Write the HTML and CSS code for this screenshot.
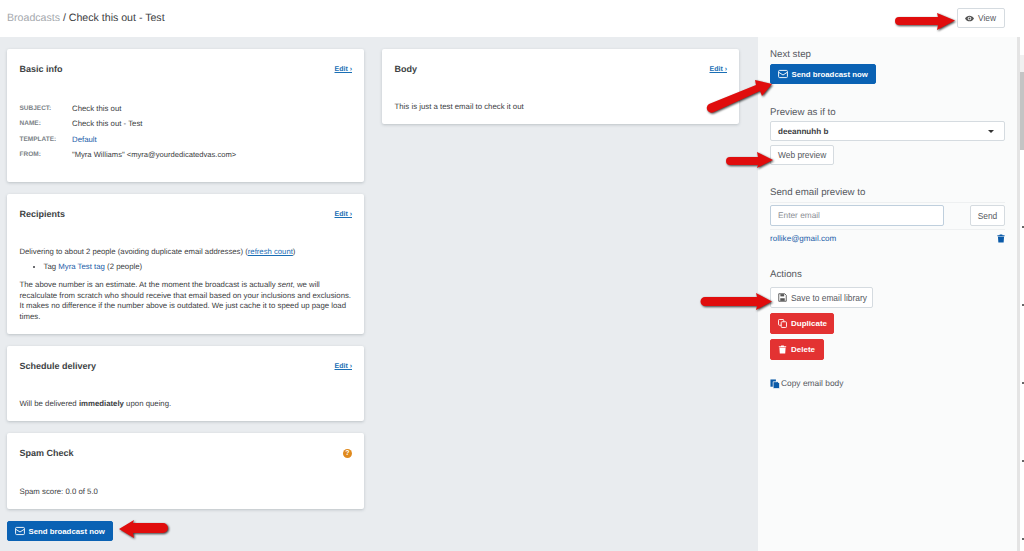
FILE: index.html
```html
<!DOCTYPE html>
<html lang="en">
<head>
<meta charset="utf-8">
<title>Broadcast</title>
<link rel="stylesheet" href="styles.css">
</head>
<body>
<header class="topbar">
  <div class="crumb"><span class="crumb-link">Broadcasts</span> / Check this out - Test</div>
  <button class="btn btn-default btn-view"><svg class="ic" viewBox="0 0 12 12"><path d="M0 6c1.500-2.500 3.500-3.800 6-3.800S10.500 3.500 12 6c-1.500 2.500-3.500 3.800-6 3.800S1.500 8.500 0 6z" fill="#555"/><circle cx="6" cy="6" r="2.300" fill="#fff"/><circle cx="6" cy="6" r="1.300" fill="#555"/></svg>View</button>
</header>
<div class="layout">
  <main class="main">
    <div class="columns">
      <div class="col">
        <section class="card card-basic">
          <div class="card-head"><h2>Basic info</h2><a class="edit">Edit ›</a></div>
          <dl class="info">
            <div class="info-row"><dt>SUBJECT:</dt><dd>Check this out</dd></div>
            <div class="info-row"><dt>NAME:</dt><dd>Check this out - Test</dd></div>
            <div class="info-row"><dt>TEMPLATE:</dt><dd class="link">Default</dd></div>
            <div class="info-row"><dt>FROM:</dt><dd class="from">"Myra Williams" &lt;myra@yourdedicatedvas.com&gt;</dd></div>
          </dl>
        </section>
        <section class="card card-recipients">
          <div class="card-head"><h2>Recipients</h2><a class="edit">Edit ›</a></div>
          <p class="deliver">Delivering to about 2 people (avoiding duplicate email addresses) (<a class="under">refresh count</a>)</p>
          <ul class="tags"><li>Tag <span class="link">Myra Test tag</span> (2 people)</li></ul>
          <p class="note">The above number is an estimate. At the moment the broadcast is actually <em>sent</em>, we will recalculate from scratch who should receive that email based on your inclusions and exclusions. It makes no difference if the number above is outdated. We just cache it to speed up page load times.</p>
        </section>
        <section class="card card-schedule">
          <div class="card-head"><h2>Schedule delivery</h2><a class="edit">Edit ›</a></div>
          <p class="card-text">Will be delivered <strong>immediately</strong> upon queing.</p>
        </section>
        <section class="card card-spam">
          <div class="card-head"><h2>Spam Check</h2><span class="help">?</span></div>
          <p class="card-text">Spam score: 0.0 of 5.0</p>
        </section>
        <button class="btn btn-primary"><svg class="ic ic-mail" viewBox="0 0 12 12"><rect x="0.700" y="1.700" width="10.600" height="8.600" rx="1.200" fill="none" stroke="#fff" stroke-width="1.100"/><path d="M1 4l5 3.200L11 4" fill="none" stroke="#fff" stroke-width="1.100"/></svg>Send broadcast now</button>
      </div>
      <div class="col">
        <section class="card card-body">
          <div class="card-head"><h2>Body</h2><a class="edit">Edit ›</a></div>
          <p class="card-text">This is just a test email to check it out</p>
        </section>
      </div>
    </div>
  </main>
  <aside class="side">
    <h3 class="side-title first">Next step</h3>
    <button class="btn btn-primary"><svg class="ic ic-mail" viewBox="0 0 12 12"><rect x="0.700" y="1.700" width="10.600" height="8.600" rx="1.200" fill="none" stroke="#fff" stroke-width="1.100"/><path d="M1 4l5 3.200L11 4" fill="none" stroke="#fff" stroke-width="1.100"/></svg>Send broadcast now</button>
    <h3 class="side-title preview-title">Preview as if to</h3>
    <div class="select"><span>deeannuhh b</span><i class="caret"></i></div>
    <button class="btn btn-default btn-web">Web preview</button>
    <h3 class="side-title send-title">Send email preview to</h3>
    <div class="send-row">
      <div class="input">Enter email</div>
      <button class="btn btn-default btn-send">Send</button>
    </div>
    <div class="preview-row">
      <a class="link">rollike@gmail.com</a>
      <svg class="trash" viewBox="0 0 10 11"><path d="M3.500 0.500h3l.5 1h2.500v1.200H0.500V1.500H3zM1.200 3.400h7.600l-.5 7.100H1.700z" fill="#0a5aa8"/></svg>
    </div>
    <h3 class="side-title actions-title">Actions</h3>
    <button class="btn btn-default btn-save"><svg class="ic" viewBox="0 0 12 12"><path d="M1 1h8l2 2v8H1z" fill="none" stroke="#555" stroke-width="1.200"/><rect x="3.200" y="1.500" width="5" height="3" fill="#555"/><rect x="3" y="7" width="6" height="3.500" fill="#555"/></svg>Save to email library</button>
    <button class="btn btn-danger btn-dup"><svg class="ic" viewBox="0 0 12 12"><rect x="0.700" y="0.700" width="7" height="7.600" rx="1" fill="none" stroke="#fff" stroke-width="1.200"/><rect x="4.300" y="3.700" width="7" height="7.600" rx="1" fill="#e33232" stroke="#fff" stroke-width="1.200"/></svg>Duplicate</button>
    <button class="btn btn-danger btn-del"><svg class="ic" viewBox="0 0 10 11"><path d="M3.500 0.500h3l.5 1h2.500v1.200H0.500V1.500H3zM1.200 3.400h7.600l-.5 7.100H1.700z" fill="#fff"/></svg>Delete</button>
    <div class="copy"><svg class="copy-ic" viewBox="0 0 11 11"><path d="M0.500 0.500h6v8h-6z" fill="#0a5aa8"/><path d="M3.500 3h5l2 2v5.500h-7z" fill="#0a5aa8" stroke="#fafbfb" stroke-width="0.800"/></svg>Copy email body</div>
  </aside>
  <div class="scrollbar">
    <div class="scroll-cap"></div>
    <div class="scroll-track"></div>
    <div class="scroll-thumb"></div>
    <div class="scroll-mark"></div>
    <div class="scroll-mark"></div>
    <div class="scroll-mark"></div>
    <div class="scroll-mark"></div>
    <div class="scroll-mark"></div>
  </div>
</div>

<svg class="arrow arrow-view" viewBox="0 0 66 24"><path class="arrow-shape" d="M6 6H45L44 2L62 9.500L44 19L45 14H6a4 4 0 0 1 0-8z"/></svg>
<svg class="arrow arrow-send" viewBox="0 0 70 40"><path class="arrow-shape" d="M3 28L50 9L49 4L66 8L56 20L54 15L8 36a4.500 4.500 0 0 1-5-8z"/></svg>
<svg class="arrow arrow-web" viewBox="0 0 50 24"><path class="arrow-shape" d="M5 9H33L32 4L48 12L32 20L33 17H5a4 4 0 0 1 0-8z"/></svg>
<svg class="arrow arrow-save" viewBox="0 0 74 24"><path class="arrow-shape" d="M5 6H57L56 2L72 10.500L56 19L57 15H5a4.500 4.500 0 0 1 0-9z"/></svg>
<svg class="arrow arrow-bottom" viewBox="0 0 52 24"><path class="arrow-shape" d="M45 5H15L16 2L1 11L16 20L15 15H45a5 5 0 0 0 0-10z"/></svg>
</body>
</html>
```

FILE: styles.css
```css
* { box-sizing: border-box; }
html, body { margin: 0; padding: 0; }
body {
  width: 1024px;
  height: 551px;
  overflow: hidden;
  position: relative;
  background: #e9ecef;
  color: #3b3d42;
  font-family: "Liberation Sans", Arial, sans-serif;
  font-size: 8px;
  line-height: 11px;
  text-rendering: geometricPrecision;
}
.topbar {
  height: 37px;
  background: #fff;
  display: flex;
  justify-content: space-between;
  align-items: center;
  padding: 0 19px 1px 7px;
}
.crumb { font-size: 10.600px; }
.crumb-link { color: #a4a8ad; }
.layout { display: flex; height: 514px; }
.main { width: 758px; padding: 12px 0 0 7px; }
.columns { display: flex; gap: 18px; }
.col { width: 357px; }
.card {
  background: #fff;
  border-radius: 2px;
  box-shadow: 0 1px 3px rgba(60, 70, 80, .25);
  padding: 12px 12px 12px 12.500px;
  margin-bottom: 12px;
}
.card-head { display: flex; justify-content: space-between; align-items: center; height: 17px; }
.card-head h2 { margin: 0; font-size: 9px; font-weight: 700; color: #3d3f44; }
.edit { color: #1a6fb5; font-size: 7px; font-weight: 700; text-decoration: underline; }
.card-basic { height: 133px; }
.info { margin: 23px 0 0; }
.info-row { display: flex; height: 15.300px; align-items: center; }
.info-row dt { width: 52.500px; color: #7a7f86; font-size: 6.500px; font-weight: 700; }
.info-row dd { margin: 0; font-size: 7.800px; }
.info-row .from { font-size: 7.600px; }
.link { color: #1b5ca8; }
.under { color: #1b6eb5; text-decoration: underline; }
.card-recipients { height: 140px; }
.deliver { margin: 23px 0 0; font-size: 7.730px; }
.tags { margin: 4px 0 8px; padding-left: 24px; font-size: 7.800px; }
.note { margin: 0; font-size: 7.800px; line-height: 10.500px; }
.card-schedule { height: 75px; }
.card-spam { height: 76px; }
.card-body { height: 75px; }
.card-text { margin: 23px 0 0; font-size: 7.800px; }
.card-spam .card-text { margin-top: 24px; }
.help {
  width: 9px; height: 9px; border-radius: 50%;
  background: #e08a1e; color: #fff;
  font-size: 7px; line-height: 9px; font-weight: 700; text-align: center;
}
.btn {
  display: inline-flex; align-items: center;
  font-family: inherit; font-size: 8.400px;
  height: 20px; padding: 0 7px;
  border-radius: 2px; white-space: nowrap;
  cursor: pointer;
}
.btn-primary { background: #0a62b4; border: 1px solid #0a62b4; color: #fff; font-weight: 700; font-size: 7.800px; width: 106px; }
.btn-default { background: #fff; border: 1px solid #d5dbe0; color: #55585e; }
.btn-danger { background: #e33232; border: 1px solid #e33232; color: #fff; font-weight: 700; font-size: 8px; }
.ic { width: 9px; height: 9px; margin-right: 4px; flex: none; }
.ic-mail { width: 10px; height: 10px; margin-right: 3.500px; }
.btn-view { width: 48px; height: 20px; }
.side {
  width: 259px;
  background: #fafbfb;
  padding: 0 12px;
  display: flex; flex-direction: column; align-items: flex-start;
}
.side-title { margin: 0; font-size: 9.700px; font-weight: 400; color: #55585e; line-height: 11px; }
.first { margin-top: 12px; margin-bottom: 4px; }
.preview-title { margin-top: 23px; margin-bottom: 3px; }
.select {
  width: 235px; height: 20px; background: #fff;
  border: 1px solid #d5dbe0; border-radius: 2px;
  display: flex; align-items: center; justify-content: space-between;
  padding: 0 10px 0 7px; font-size: 8.100px; font-weight: 700;
}
.caret { width: 0; height: 0; border: 3px solid transparent; border-top: 3.500px solid #333; border-bottom: 0; }
.btn-web { margin-top: 4px; width: 64px; }
.send-title { margin-top: 22px; padding-bottom: 4px; width: 235px; }
.send-row {
  width: 235px; display: flex; justify-content: space-between;
  padding: 2px 0 3px;
  border-top: 1px solid #eef0f1; border-bottom: 1px solid #eef0f1;
}
.input {
  width: 174px; height: 21px; background: #fff;
  border: 1px solid #bfcfdd; border-radius: 2px;
  padding: 0 7px; line-height: 19px; color: #8c9096; font-size: 8.300px;
}
.btn-send { width: 35px; height: 21px; justify-content: center; padding: 0; }
.preview-row { width: 235px; display: flex; justify-content: space-between; align-items: center; font-size: 8.100px; margin-top: 2px; height: 13px; }
.trash { width: 8px; height: 9px; }
.actions-title { margin-top: 24px; margin-bottom: 7px; }
.btn-save { width: 103px; height: 21px; }
.btn-dup { width: 64px; height: 21px; margin-top: 5px; }
.btn-del { width: 54px; height: 21px; margin-top: 5px; }
.copy { margin-top: 18px; display: flex; align-items: center; font-size: 8.400px; color: #55585e; }
.copy-ic { width: 10px; height: 10px; margin-right: 1px; }
.scrollbar { width: 7px; background: #fff; border-left: 3px solid #e4e4e4; }
.scroll-cap { height: 18px; background: #fff; }
.scroll-track { height: 17px; background: #f0f0f0; }
.scroll-thumb { height: 78px; background: #c4c4c4; }
.scroll-mark { width: 2px; height: 2px; background: #666; margin: 76px 0 0 2px; }
.arrow { position: absolute; filter: drop-shadow(1px 1.500px 1px rgba(0, 0, 0, .75)); }
.arrow-shape { fill: #e00d0d; }
.arrow-view { left: 893px; top: 11px; width: 66px; height: 24px; }
.arrow-send { left: 706px; top: 76px; width: 70px; height: 40px; }
.arrow-web { left: 725px; top: 148px; width: 50px; height: 24px; }
.arrow-save { left: 700px; top: 291px; width: 74px; height: 24px; }
.arrow-bottom { left: 118px; top: 518px; width: 52px; height: 24px; }
```
